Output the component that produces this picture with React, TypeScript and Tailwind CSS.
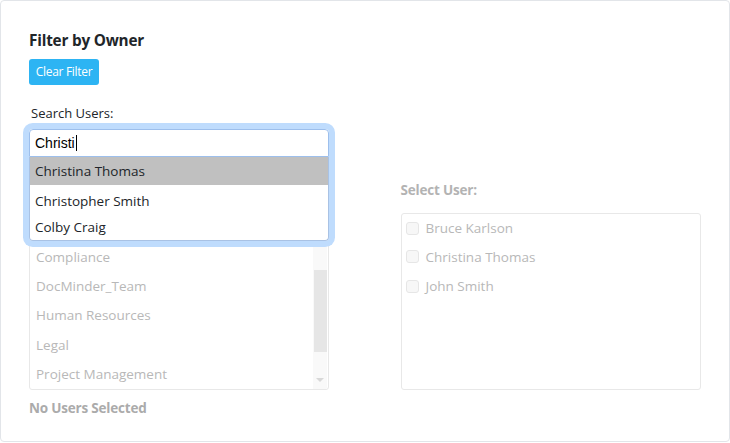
import React from "react";

const F = { fontFamily: '"Open Sans", "Noto Sans", sans-serif' };

export default function App() {
  const groups = ["Compliance", "DocMinder_Team", "Human Resources", "Legal", "Project Management"];
  const users = ["Bruce Karlson", "Christina Thomas", "John Smith"];
  return (
    <div className="w-[730px] h-[443px] bg-white" style={F}>
      <div className="w-[730px] h-[442px] border border-[#e2e5e9] rounded-[4px] pl-[28px] pr-[28px] pt-[29px]">
        <div className="text-[15.3px] font-bold leading-[20px] text-[#212529] tracking-[-0.2px]">Filter by Owner</div>
        <button className="mt-[9px] h-[26px] w-[70px] rounded-[3px] bg-[#2db4f3] text-white text-[12px] leading-[26px] tracking-[-0.3px]">
          Clear Filter
        </button>
        <div className="mt-[19px] pl-[2px] text-[13px] leading-[18px] text-[#212529]">Search Users:</div>
        <div className="relative mt-[7px] h-[28px] w-[300px] z-10">
          <div className="absolute left-0 top-0 w-[300px] rounded-[4px] bg-white shadow-[0_0_0_6px_#bfdcfd]">
            <div className="h-[28px] border border-[#9dbfec] rounded-t-[4px] flex items-center pl-[5px] text-[14px] text-black" style={{ fontFamily: '"Liberation Sans", Arial, sans-serif' }}>
              Christi<span className="inline-block w-[1px] h-[16px] bg-black ml-[1px]" />
            </div>
            <div className="border-x border-b border-[#a9c2e4] rounded-b-[4px] text-[13.5px] text-[#212529]">
              <div className="h-[28px] bg-[#c0c0c0] flex items-center pl-[5px]">Christina Thomas</div>
              <div className="h-[30px] flex items-center pl-[5px] pt-[2px]">Christopher Smith</div>
              <div className="h-[25px] flex items-center pl-[5px]">Colby Craig</div>
            </div>
          </div>
        </div>
        <div className="mt-[22px] flex gap-[71px]">
          <div className="w-[301px]">
            <div className="h-[34px]" />
            <div className="h-[177px] w-[300px] border border-[#e8e8e8] rounded-[3px] flex overflow-hidden">
              <div className="flex-1 pl-[6px] pt-[28px]">
                {groups.map((g) => (
                  <div key={g} className="h-[29.4px] flex items-center text-[13.5px] text-[#b8b8b8]">{g}</div>
                ))}
              </div>
              <div className="w-[14px] bg-[#f9f9f9] flex flex-col items-center pt-[56px] mr-[1px]">
                <div className="w-[13px] h-[82px] bg-[#e6e6e6]" />
                <div className="mt-[26px] w-0 h-0 border-x-[4px] border-x-transparent border-t-[4px] border-t-[#d8d8d8]" />
              </div>
            </div>
            <div className="mt-[9px] text-[13.5px] font-bold leading-[18px] text-[#ababab] tracking-[-0.2px]">No Users Selected</div>
          </div>
          <div className="w-[301px]">
            <div className="h-[34px] text-[13.5px] font-bold leading-[22px] text-[#b3b3b3] tracking-[-0.2px]">Select User:</div>
            <div className="h-[177px] w-[300px] border border-[#e8e8e8] rounded-[3px]">
              {users.map((u) => (
                <div key={u} className="h-[29.4px] flex items-center pl-[4px] text-[13.5px] text-[#b8b8b8] first:h-[28px]">
                  <span className="inline-block w-[13px] h-[13px] rounded-[3px] border border-[#e6e6e6] bg-[#f7f7f7] mr-[7px]" />
                  {u}
                </div>
              ))}
            </div>
          </div>
        </div>
      </div>
    </div>
  );
}
